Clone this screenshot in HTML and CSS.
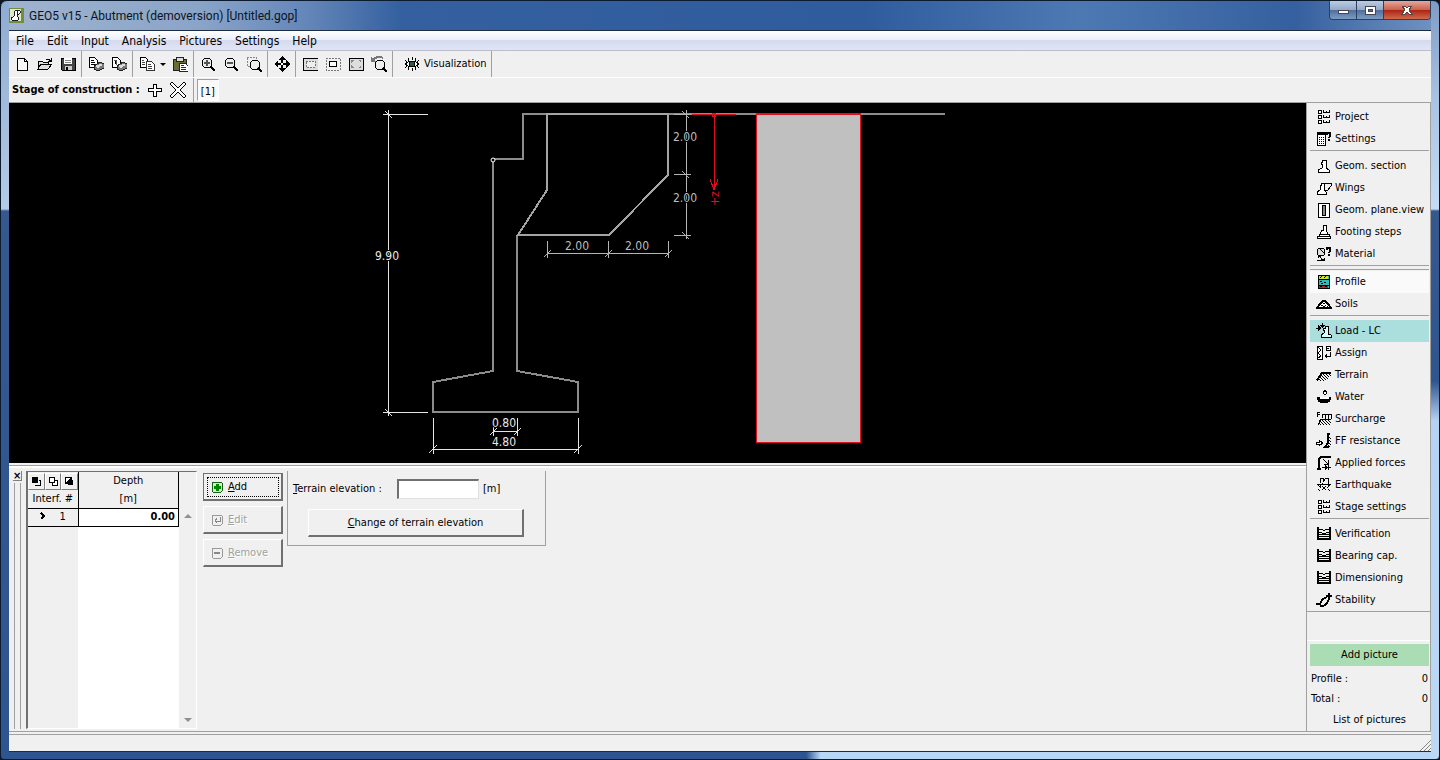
FILE: index.html
```
<!DOCTYPE html>
<html lang="en">
<head>
  <meta charset="UTF-8">
  <title>GEO5 v15 - Abutment (demoversion) [Untitled.gop]</title>
  <link rel="stylesheet" href="styles.css">
</head>
<body>
  <!-- icon set -->
  <svg class="sprite" aria-hidden="true">
    <defs>
      <pattern id="hatch" width="3" height="3" patternUnits="userSpaceOnUse"><path d="M0 0h1v1h-1zM1 1h1v1h-1zM2 2h1v1h-1z" fill="#000"/></pattern>
      <symbol id="i-new" viewBox="0 0 16 16"><path d="M3 2h7l3 3v9h-10z" fill="#f8f8f8" stroke="#000"/><path d="M10 2v3h3" fill="none" stroke="#000"/></symbol>
      <symbol id="i-open" viewBox="0 0 16 16"><path d="M1 13V5h4l1 1h5v2M1 13l3-5h11l-4 5z" fill="#ddd" stroke="#000"/><path d="M9 3h2l3 2M14 2v3h-3" fill="none" stroke="#000"/></symbol>
      <symbol id="i-save" viewBox="0 0 16 16"><path d="M1 2h14v12h-13l-1-1z" fill="#444" stroke="#000"/><path d="M4 2h8v6h-8z" fill="#fff"/><path d="M5 10h7v4h-7z" fill="#ccc"/><path d="M6 11h2v3h-2z"/><path d="M5 4h6M5 6h6" stroke="#888"/></symbol>
      <symbol id="i-print" viewBox="0 0 16 16"><path d="M1 1h5l3 3v7h-8z" fill="#fff" stroke="#000"/><path d="M3 4h3M3 6h4M3 8h4" stroke="#000"/><path d="M6 10l6-4 4 2v4l-6 3-4-2z" fill="#777" stroke="#222"/><path d="M7 10l5-2 3 1-5 3z" fill="#ddd"/></symbol>
      <symbol id="i-print2" viewBox="0 0 16 16"><path d="M1 1h5l3 3v7h-8z" fill="#fff" stroke="#000"/><path d="M3 4h2v5M5 4v4" stroke="#555"/><path d="M6 10l6-4 4 2v4l-6 3-4-2z" fill="#777" stroke="#222"/><path d="M7 10l5-2 3 1-5 3z" fill="#ddd"/></symbol>
      <symbol id="i-copy" viewBox="0 0 16 16"><path d="M1 1h5l2 2v8h-7z" fill="#fff" stroke="#000"/><path d="M7 5h5l3 3v6h-8z" fill="#fff" stroke="#333"/><path d="M3 4h2M3 6h3M3 8h3M9 8h3M9 10h4M9 12h4" stroke="#444"/></symbol>
      <symbol id="i-paste" viewBox="0 0 16 16"><path d="M1 3h13v11h-13z" fill="#6b6b35" stroke="#222"/><path d="M4 1h7v4h-7z" fill="#ddd" stroke="#222"/><path d="M7 7h6l3 3v5h-9z" fill="#fff" stroke="#224"/><path d="M9 9h3M9 11h5M9 13h5" stroke="#226"/></symbol>
      <symbol id="i-lens" viewBox="0 0 16 16"><circle cx="7" cy="7" r="5" fill="#eee" stroke="#000"/><path d="M11 11l4 4" stroke="#000" stroke-width="2"/></symbol>
      <symbol id="i-zoomin" viewBox="0 0 16 16"><use href="#i-lens"/><path d="M4 7h6M7 4v6" stroke="#555" stroke-width="2"/></symbol>
      <symbol id="i-zoomout" viewBox="0 0 16 16"><use href="#i-lens"/><path d="M4 7h6" stroke="#555" stroke-width="2"/></symbol>
      <symbol id="i-zoombox" viewBox="0 0 16 16"><path d="M1 1h9v9h-9z" fill="none" stroke="#888" stroke-dasharray="2 1"/><circle cx="9" cy="9" r="5" fill="#eee" stroke="#000"/><path d="M12 12l4 4" stroke="#000" stroke-width="2"/></symbol>
      <symbol id="i-move" viewBox="0 0 16 16"><path d="M8 1v14M1 8h14" stroke="#000" stroke-width="2"/><path d="M8 0l4 4h-8zM8 16l4-4h-8zM0 8l4-4v8zM16 8l-4-4v8z"/><path d="M7 7h2v2h-2z" fill="#fff"/></symbol>
      <symbol id="i-all" viewBox="0 0 16 16"><path d="M1 2h15v12h-15z" fill="#ddd" stroke="#000"/><path d="M4 5h9v6h-9z" fill="#eee" stroke="#777" stroke-dasharray="2 1"/></symbol>
      <symbol id="i-sel" viewBox="0 0 16 16"><path d="M1 2h14v12h-14z" fill="none" stroke="#777" stroke-dasharray="2 1"/><path d="M4 5h8v6h-8z"/><path d="M5 6h6v4h-6z" fill="#fff"/></symbol>
      <symbol id="i-fit" viewBox="0 0 16 16"><path d="M1 2h14v12h-14z" fill="#ddd" stroke="#000"/><path d="M3 4h3l-3 3zM13 4h-3l3 3zM3 12h3l-3-3zM13 12h-3l3-3z" fill="#888"/></symbol>
      <symbol id="i-zoomback" viewBox="0 0 16 16"><path d="M2 4c2-3 7-4 10-2" fill="none" stroke="#777" stroke-width="2"/><path d="M0 1l5 5h-5z" fill="#777"/><circle cx="9" cy="9" r="5" fill="#eee" stroke="#000"/><path d="M12 12l4 4" stroke="#000" stroke-width="2"/></symbol>
      <symbol id="i-eye" viewBox="0 0 16 16"><path d="M1 8c4-4 10-4 14 0-4 4-10 4-14 0z" fill="#fff" stroke="#000"/><circle cx="8" cy="8" r="3" fill="#1f5f50" stroke="#000"/><path d="M8 1v3M4 2l1 3M12 2l-1 3M1 4l2 2M15 4l-2 2M8 12v3M4 14l1-3M12 14l-1-3M1 12l2-2M15 12l-2-2" stroke="#000"/></symbol>
      <symbol id="i-plus" viewBox="0 0 16 16"><path d="M6 2h3v4h5v3h-5v5h-3v-5h-5v-3h5z" fill="#fff" stroke="#000"/></symbol>
      <symbol id="i-cross" viewBox="0 0 16 16"><path d="M2 2l12 12M14 2l-12 12" stroke="#000" stroke-width="4" stroke-linecap="square"/><path d="M2 2l12 12M14 2l-12 12" stroke="#fff" stroke-width="2" stroke-linecap="square"/></symbol>

      <symbol id="i-list" viewBox="0 0 16 16"><path d="M2 1h3v3h-3zM2 6h3v3h-3zM2 11h3v3h-3z" fill="#fff" stroke="#000"/><path d="M7 1v2h6v-2M10 2v1M7 6v2h6v-2M10 7v1M7 11v2h6v-2M10 12v1" fill="none" stroke="#000"/></symbol>
      <symbol id="i-calc" viewBox="0 0 16 16"><path d="M1 1h8v13h-8z" fill="#fff" stroke="#000"/><path d="M1 1h8v3h-8zM3 6h1v1h-1zM5 6h1v1h-1zM7 6h1v1h-1zM3 8h1v1h-1zM5 8h1v1h-1zM7 8h1v1h-1zM3 10h1v1h-1zM5 10h1v1h-1zM7 10h1v1h-1zM3 12h1v1h-1zM5 12h1v1h-1zM7 12h1v1h-1z"/><path d="M11 4v-2h3v3l-1 2M13 8v2" fill="none" stroke="#000" stroke-width="2"/></symbol>
      <symbol id="i-geom" viewBox="0 0 16 16"><path d="M6 2h4v8l3 2v2h-11v-2l4-2v-4h-1v-2h1z" fill="#fff" stroke="#000"/></symbol>
      <symbol id="i-wings" viewBox="0 0 16 16"><path d="M5 3h3v7l2 2v2h-9v-2l3-2 1-2h-1v-3h1z" fill="#fff" stroke="#000"/><path d="M8 3h7v3l-3 4h-3" fill="none" stroke="#000"/></symbol>
      <symbol id="i-plane" viewBox="0 0 16 16"><path d="M2 1h11v14h-11z" fill="#fff" stroke="#000"/><path d="M6 3h3v10h-3z" fill="#888" stroke="#000"/></symbol>
      <symbol id="i-footing" viewBox="0 0 16 16"><path d="M7 1h3v5l2 4h-8l2-4h1zM3 10h10v2h-10zM1 12h13v2h-13z" fill="#fff" stroke="#000"/></symbol>
      <symbol id="i-material" viewBox="0 0 16 16"><circle cx="5" cy="6" r="4" fill="#ddd" stroke="#000"/><path d="M4 3l4 4M2 12c0-2 3-2 3 0s4 2 4 0M1 14h8" fill="none" stroke="#000"/><path d="M11 4v-2h3v3l-1 2M13 8v2" fill="none" stroke="#000" stroke-width="2"/></symbol>
      <symbol id="i-profile" viewBox="0 0 16 16"><path d="M2 1h11v13h-11z" fill="#3bb" stroke="#000"/><path d="M3 2h9v3h-9z" fill="#cd3"/><path d="M3 11h9v3h-9z" fill="#b22"/><path d="M2 5h11M2 11h11M4 7h2M8 8h2M5 9h2M4 4l2-2M8 4l2-2M4 13l2-1M9 13l2-1" stroke="#000"/></symbol>
      <symbol id="i-soils" viewBox="0 0 16 16"><path d="M1 12l3-4 3-3h2l3 3 3 4z" fill="#fff" stroke="#000" stroke-width="2"/><path d="M7 7h2M5 9h2M9 9h1M7 10h2M4 11h1M11 10h1" stroke="#000"/></symbol>
      <symbol id="i-load" viewBox="0 0 16 16"><path d="M9 3h3v8l3 1v2h-10v-2l3-2v-3h-1v-2h2z" fill="#d8ffff" stroke="#000"/><path d="M0 5h4M6 0v3" stroke="#000"/><path d="M2 2l4 3-4 3zM4 2h5l-3 3z"/></symbol>
      <symbol id="i-assign" viewBox="0 0 16 16"><path d="M1 1h5v13h-5zM10 1h4v4h-4z" fill="#fff" stroke="#000"/><path d="M2 2l3 3-3 3 3 3-3 2M11 3h2M14 7v4h-4" fill="none" stroke="#000"/><path d="M8 11l3-3v6z"/></symbol>
      <symbol id="i-terrain" viewBox="0 0 16 16"><path d="M1 13l4-7h10v3l-6 5h-8z" fill="url(#hatch)"/><path d="M1 13l5-7h9" fill="none" stroke="#000" stroke-width="2"/></symbol>
      <symbol id="i-water" viewBox="0 0 16 16"><path d="M1 8h14c0 4-2 6-5 6h-4c-3 0-5-2-5-6z"/><ellipse cx="8" cy="9" rx="5" ry="1" fill="#fff"/><path d="M9 1l2 3-2 2-2-2z" fill="#fff" stroke="#000"/></symbol>
      <symbol id="i-surcharge" viewBox="0 0 16 16"><path d="M1 6V1h3M1 3h3M6 7V3h9v5M9 3v5M12 3v5" fill="none" stroke="#000"/><path d="M4 8h11v6h-13z" fill="url(#hatch)"/><path d="M2 14l3-6h10" fill="none" stroke="#000"/></symbol>
      <symbol id="i-resist" viewBox="0 0 16 16"><path d="M0 9h3v-2l4 3-4 3v-2h-3z" fill="#fff" stroke="#000"/><path d="M14 1h-2v9l-3 4h4" fill="none" stroke="#000" stroke-width="2"/><path d="M12 3h3v11h-3z" fill="url(#hatch)"/></symbol>
      <symbol id="i-forces" viewBox="0 0 16 16"><path d="M3 14V5c0-2 1-3 3-3h9M1 14h4" fill="none" stroke="#000" stroke-width="2"/><path d="M7 4l5 5M12 5v4h-4M6 12h5M12 10v5M10 12h5" fill="none" stroke="#000"/><path d="M9 10l3 2-3 3z"/></symbol>
      <symbol id="i-quake" viewBox="0 0 16 16"><path d="M4 6V1h3v4l3-4h2v6M1 7h14M2 8l3 3M14 8l-3 3M6 9l4 4M10 9l-4 4M2 12l2 2M12 12l2 2M4 7v3M12 7v3" fill="none" stroke="#000"/></symbol>
      <symbol id="i-verify" viewBox="0 0 16 16"><path d="M1 1h2v12h-2zM13 1h2v12h-2zM1 12h14v2h-14z"/><path d="M3 3h3l2 2 2-2h3M3 6l3 1h4l3-1M3 9l3-1h4l3 1M3 10h10" fill="none" stroke="#000"/></symbol>
      <symbol id="i-stability" viewBox="0 0 16 16"><path d="M0 12h4l1 2c5 0 8-4 8-10M5 11c0-3 3-5 6-6M10 4h6M13 1v5" fill="none" stroke="#000" stroke-width="2"/></symbol>
    </defs>
  </svg>

  <div class="window">
    <header class="titlebar">
      <svg class="app-icon" viewBox="0 0 16 16"><rect width="16" height="16" rx="2" fill="#6d8f3f"/><rect x="1" y="1" width="12" height="13" fill="#dfe8c8"/><path d="M6 3h3v6l1 1v3H3v-3l2-1 1-2zM9 3h3v2l-2 2H9" fill="#fff" stroke="#111"/></svg>
      <h1>GEO5 v15 - Abutment (demoversion) [Untitled.gop]</h1>
      <div class="window-buttons">
        <button class="minimize" aria-label="Minimize"><svg viewBox="0 0 12 10"><rect x="1" y="5" width="10" height="3" fill="#fff" stroke="#445"/></svg></button>
        <button class="maximize" aria-label="Maximize"><svg viewBox="0 0 12 10"><path d="M1 1h10v8h-10zM4 4h4v2h-4z" fill="#fff" fill-rule="evenodd" stroke="#445"/></svg></button>
        <button class="close" aria-label="Close"><svg viewBox="0 0 12 10"><path d="M1 1h3l2 2 2-2h3l-3 4 3 4h-3l-2-2-2 2h-3l3-4z" fill="#fff" stroke="#544"/></svg></button>
      </div>
    </header>

    <div class="client">
      <nav class="menu">
        <button>File</button><button>Edit</button><button>Input</button><button>Analysis</button><button>Pictures</button><button>Settings</button><button>Help</button>
      </nav>

      <div class="toolbar">
        <div class="tools">
          <button aria-label="New"><svg><use href="#i-new"/></svg></button>
          <button aria-label="Open"><svg><use href="#i-open"/></svg></button>
          <button aria-label="Save"><svg><use href="#i-save"/></svg></button>
        </div>
        <div class="tools">
          <button aria-label="Print document"><svg><use href="#i-print"/></svg></button>
          <button aria-label="Print picture"><svg><use href="#i-print2"/></svg></button>
        </div>
        <div class="tools">
          <button aria-label="Copy"><svg><use href="#i-copy"/></svg></button>
          <button class="drop" aria-label="Copy options"></button>
          <button aria-label="Paste"><svg><use href="#i-paste"/></svg></button>
        </div>
        <div class="tools">
          <button aria-label="Zoom in"><svg><use href="#i-zoomin"/></svg></button>
          <button aria-label="Zoom out"><svg><use href="#i-zoomout"/></svg></button>
          <button aria-label="Zoom window"><svg><use href="#i-zoombox"/></svg></button>
        </div>
        <div class="tools">
          <button aria-label="Pan"><svg><use href="#i-move"/></svg></button>
        </div>
        <div class="tools">
          <button aria-label="Show all"><svg><use href="#i-all"/></svg></button>
          <button aria-label="Show selection"><svg><use href="#i-sel"/></svg></button>
          <button aria-label="Fit"><svg><use href="#i-fit"/></svg></button>
          <button aria-label="Previous zoom"><svg><use href="#i-zoomback"/></svg></button>
        </div>
        <div class="tools">
          <button class="wide"><svg><use href="#i-eye"/></svg>Visualization</button>
        </div>
      </div>

      <div class="stagebar">
        <b>Stage of construction :</b>
        <button aria-label="Add stage"><svg><use href="#i-plus"/></svg></button>
        <button aria-label="Remove stage"><svg><use href="#i-cross"/></svg></button>
        <div class="stages"><button>[1]</button></div>
      </div>

      <div class="main">
        <div class="work">
          <svg class="drawing" viewBox="9 103 1297 360" preserveAspectRatio="xMidYMin meet">
            <g class="outline">
              <path d="M945 114H523V159H493V371L433 382V412H578V382L517 371V235"/>
              <path class="wing" d="M547 114V190L518 235H609L668 175V114z"/>
            </g>
            <rect class="soil-edge" x="756" y="113" width="105" height="330"/>
            <rect class="soil" x="757" y="115" width="103" height="327"/>
            <circle class="node" cx="493" cy="160" r="2"/>

            <g class="dim strong">
              <path d="M388 110V416M383 114H428M383 412H428M385 111l7 7M385 409l7 7"/>
              <path d="M433 418V454M578 418V454M433 449H578M429 453l8-8M574 453l8-8"/>
              <path d="M493 426V436M517 418V436M493 431H517M490 435l7-7M514 435l7-7"/>
            </g>
            <g class="dim">
              <path d="M547 241V258M608 241V258M668 241V258M547 253H668M544 257l7-7M605 257l7-7M665 257l7-7"/>
              <path d="M686 110V239M674 114H691M674 174H691M674 235H691M682 111l7 7M682 171l7 7M682 232l7 7"/>
            </g>
            <g class="axis">
              <path d="M692 114H736M714 114V190M710 179l4 11 4-11"/>
              <circle cx="714" cy="115" r="2"/>
              <text transform="translate(719 206) rotate(-90)">+z</text>
            </g>
            <g class="values">
              <text class="bright" x="387" y="260">9.90</text>
              <text class="bright" x="504" y="427">0.80</text>
              <text class="bright" x="504" y="446">4.80</text>
              <text x="577" y="250">2.00</text>
              <text x="637" y="250">2.00</text>
              <text x="685" y="141">2.00</text>
              <text x="685" y="202">2.00</text>
            </g>
          </svg>

          <section class="panel">
            <div class="grip"><button aria-label="Close panel">×</button></div>

            <div class="grid">
              <table>
                <thead>
                  <tr>
                    <th>
                      <div class="row-tools">
                        <button aria-label="Select all"><svg viewBox="0 0 10 10"><path d="M1 1h6v6h-6z"/><path d="M8 4h1v5h-5" fill="none" stroke="#000"/></svg></button>
                        <button aria-label="Select none"><svg viewBox="0 0 10 10"><path d="M4 4h5v5h-5z" fill="#fff" stroke="#000"/><path d="M1 1h5v5h-5z" fill="#fff" stroke="#000"/></svg></button>
                        <button aria-label="Invert"><svg viewBox="0 0 10 10"><path d="M1 1h6v6h-6z" fill="#fff" stroke="#000"/><path d="M7 1v6h-6zM8 4h1v5h-5v-1z"/></svg></button>
                      </div>
                    </th>
                    <th>Depth</th>
                  </tr>
                  <tr><th>Interf. #</th><th>[m]</th></tr>
                </thead>
                <tbody>
                  <tr><th class="row-no"><svg viewBox="0 0 6 8"><path d="M1 1l3 3-3 3" fill="none" stroke="#000" stroke-width="2"/></svg><span>1</span></th><td>0.00</td></tr>
                </tbody>
              </table>
              <div class="scroll"></div>
            </div>

            <div class="actions">
              <button class="focused"><svg viewBox="0 0 12 12"><rect x="1" y="1" width="10" height="10" rx="1" fill="#cfeccf" stroke="#186018"/><path d="M5 3h2v2h2v2h-2v2h-2v-2h-2v-2h2z" fill="#080" stroke="#080"/></svg><span><u>A</u>dd</span></button>
              <button disabled><svg viewBox="0 0 12 12"><rect x="1" y="1" width="10" height="10" rx="1" fill="none" stroke="#999"/><path d="M9 3v4h-5M6 4l-2 3 2 2" fill="none" stroke="#888"/></svg><span><u>E</u>dit</span></button>
              <button disabled><svg viewBox="0 0 12 12"><rect x="1" y="1" width="10" height="10" rx="1" fill="none" stroke="#999"/><path d="M3 6h6" stroke="#888" stroke-width="2"/></svg><span><u>R</u>emove</span></button>
            </div>

            <div class="terrain">
              <div class="field">
                <label for="elevation"><u>T</u>errain elevation :</label>
                <input type="text" id="elevation">
                <span>[m]</span>
              </div>
              <button><span><u>C</u>hange of terrain elevation</span></button>
            </div>
          </section>
        </div>

        <aside class="side">
          <nav class="modes">
            <div>
              <button><svg><use href="#i-list"/></svg>Project</button>
              <button><svg><use href="#i-calc"/></svg>Settings</button>
            </div>
            <div class="double">
              <button><svg><use href="#i-geom"/></svg>Geom. section</button>
              <button><svg><use href="#i-wings"/></svg>Wings</button>
              <button><svg><use href="#i-plane"/></svg>Geom. plane.view</button>
              <button><svg><use href="#i-footing"/></svg>Footing steps</button>
              <button><svg><use href="#i-material"/></svg>Material</button>
            </div>
            <div>
              <button class="current"><svg><use href="#i-profile"/></svg>Profile</button>
              <button><svg><use href="#i-soils"/></svg>Soils</button>
            </div>
            <div>
              <button class="hot"><svg><use href="#i-load"/></svg>Load - LC</button>
              <button><svg><use href="#i-assign"/></svg>Assign</button>
              <button><svg><use href="#i-terrain"/></svg>Terrain</button>
              <button><svg><use href="#i-water"/></svg>Water</button>
              <button><svg><use href="#i-surcharge"/></svg>Surcharge</button>
              <button><svg><use href="#i-resist"/></svg>FF resistance</button>
              <button><svg><use href="#i-forces"/></svg>Applied forces</button>
              <button><svg><use href="#i-quake"/></svg>Earthquake</button>
              <button><svg><use href="#i-list"/></svg>Stage settings</button>
            </div>
            <div>
              <button><svg><use href="#i-verify"/></svg>Verification</button>
              <button><svg><use href="#i-verify"/></svg>Bearing cap.</button>
              <button><svg><use href="#i-verify"/></svg>Dimensioning</button>
              <button><svg><use href="#i-stability"/></svg>Stability</button>
            </div>
          </nav>
          <div class="pictures">
            <button class="add-picture">Add picture</button>
            <p><span>Profile :</span><span>0</span></p>
            <p><span>Total :</span><span>0</span></p>
            <button>List of pictures</button>
          </div>
        </aside>
      </div>

      <footer class="status"><svg viewBox="0 0 12 12"><path d="M1 12L12 1M5 12l7-7M9 12l3-3" stroke="#888"/></svg></footer>
    </div>
  </div>
</body>
</html>
```
FILE: styles.css
```
* {
  box-sizing: border-box;
}
body {
  margin: 0;
  background: #101820;
  font-family: "DejaVu Sans Condensed", "DejaVu Sans", sans-serif;
  font-size: 11px;
  line-height: 14px;
  color: #000;
}
button {
  font: inherit;
  color: inherit;
  background: none;
  border: none;
  padding: 0;
}
svg {
  display: block;
  shape-rendering: crispEdges;
}
.sprite {
  position: absolute;
  width: 0;
  height: 0;
}

/* window frame */
.window {
  display: flex;
  flex-direction: column;
  height: 100vh;
  padding: 0 8px 7px;
  border: 1px solid #0c1c30;
  border-radius: 7px 7px 4px 4px;
  background:
    linear-gradient(#7f9cc4 0, #a9c3e4 100px, #c4dcf6 208px, #35588e 210px, #2f5590 380px, #b4d3f4 420px, #bcd8f5 100%) right / 8px 100% no-repeat,
    linear-gradient(#8fabd0 0, #b5cbe6 208px, #35588e 210px, #2f5590 100%) left / 8px 100% no-repeat,
    linear-gradient(90deg, #2f5590 56%, #b8d6f5 57%) bottom / 100% 8px no-repeat,
    linear-gradient(90deg, #9fb4cf 0, #8aa4c8 200px, #6285b8 310px, #34609f 400px, #2f5c9d 60%, #4d79b3 75%, #35609f 90%, #7394c2 100%);
}
.titlebar {
  display: flex;
  align-items: center;
  gap: 5px;
  height: 29px;
}
.app-icon {
  width: 15px;
  height: 15px;
}
.titlebar h1 {
  flex: 1;
  margin: 0;
  font: 12px Roboto, "Open Sans", sans-serif;
  color: #0c1420;
}
.window-buttons {
  display: flex;
  align-self: flex-start;
  border: 1px solid #2c3f5c;
  border-top: none;
  border-radius: 0 0 4px 4px;
  overflow: hidden;
}
.window-buttons button {
  display: flex;
  justify-content: center;
  align-items: center;
  width: 27px;
  height: 18px;
  border-right: 1px solid #2c3f5c;
  background: linear-gradient(#bccbe0 0, #93a9c8 50%, #4f6e9b 51%, #7c9bc4 100%);
}
.window-buttons .close {
  width: 46px;
  border: none;
  background: linear-gradient(#e5a899 0, #cb5f4c 50%, #ad2414 51%, #cf6a4a 100%);
}
.window-buttons svg {
  width: 12px;
  height: 10px;
}
.client {
  flex: 1;
  display: flex;
  flex-direction: column;
  min-height: 0;
  border: 1px solid #1c2c44;
  border-width: 1px 0 1px 0;
  background: #f0f0f0;
}

/* bars on top */
.menu {
  display: flex;
  align-items: center;
  gap: 1px;
  height: 20px;
  padding-left: 1px;
  border-bottom: 1px solid #b8bccb;
  background: linear-gradient(#fff 0, #eceffa 45%, #d5daee 50%, #e1e5f6 100%);
  font-size: 12px;
}
.menu button {
  padding: 0 6px;
}
.toolbar,
.stagebar {
  display: flex;
  align-items: center;
}
.toolbar {
  height: 27px;
  border-bottom: 1px solid #fff;
}
.tools {
  display: flex;
  align-items: center;
  height: 26px;
  padding: 0 2px;
  border-right: 1px solid #a0a0a0;
}
.tools:first-child {
  padding-left: 1px;
}
.tools button {
  display: flex;
  justify-content: center;
  align-items: center;
  width: 23px;
  height: 22px;
}
.tools svg,
.stagebar svg,
.modes svg {
  width: 16px;
  height: 16px;
}
.tools .wide {
  width: auto;
  gap: 4px;
  padding: 0 3px 0 9px;
}
.tools .drop {
  width: 10px;
}
.drop::after {
  content: "";
  border: 3px solid transparent;
  border-top-color: #000;
  border-bottom: none;
}
.stagebar {
  height: 25px;
  gap: 7px;
  padding-left: 3px;
  border-bottom: 1px solid #a0a0a0;
}
.stages {
  align-self: stretch;
  padding: 1px 0 0 3px;
  border-left: 1px solid #a0a0a0;
}
.stages button {
  height: 22px;
  padding: 3px 3px 0;
  border: 1px solid #a0a0a0;
  border-color: #a0a0a0 #fff #fff #a0a0a0;
  background: #fafafa;
}

/* drawing and input panel */
.main {
  flex: 1;
  display: flex;
  min-height: 0;
}
.work {
  flex: 1;
  display: flex;
  flex-direction: column;
  min-width: 0;
  border-right: 1px solid #a0a0a0;
}
.drawing {
  flex: 1;
  width: 100%;
  min-height: 0;
  background: #000;
}
.outline path {
  fill: none;
  stroke: #8c8c8c;
  stroke-width: 2;
}
.outline .wing {
  stroke: #a4a4a4;
}
.soil-edge {
  fill: #e01020;
}
.soil {
  fill: #c0c0c0;
}
.node {
  fill: #000;
  stroke: #fff;
  shape-rendering: auto;
}
.dim path {
  fill: none;
  stroke: #b4b4b4;
}
.strong path {
  stroke: #e4e4e4;
}
.axis {
  fill: none;
  stroke: #e01020;
}
.axis text {
  fill: #e01020;
  stroke: none;
  font-size: 12px;
}
.values text {
  fill: #bcbcbc;
  stroke: #000;
  stroke-width: 2px;
  paint-order: stroke;
  text-anchor: middle;
  font-size: 12px;
}
.values .bright {
  fill: #e8e8e8;
}
.panel {
  display: flex;
  height: 267px;
  margin-top: 2px;
  padding: 5px 0 2px 4px;
  border-top: 1px solid #a0a0a0;
  border-bottom: 1px solid #a0a0a0;
  box-shadow: inset 0 2px #fff;
}
.grip {
  width: 9px;
  display: flex;
  flex-direction: column;
  align-items: center;
}
.grip button {
  width: 9px;
  height: 10px;
  border-right: 1px solid #808080;
  border-bottom: 1px solid #808080;
  font-weight: bold;
  line-height: 8px;
}
.grip::after {
  content: "";
  flex: 1;
  width: 5px;
  margin-top: 2px;
  border: solid #a0a0a0;
  border-width: 0 1px;
}
.grid {
  display: flex;
  width: 171px;
  margin-left: 4px;
  border: 1px solid #fff;
  border-top-color: #707070;
  border-left: 2px solid #707070;
  background: linear-gradient(90deg, #f0f0f0 50px, #fff 50px);
}
.grid table {
  flex: 1;
  align-self: flex-start;
  border-collapse: collapse;
  table-layout: fixed;
}
.grid th {
  height: 18px;
  padding: 0;
  border-right: 1px solid #000;
  background: #f0f0f0;
  font-weight: normal;
}
.grid th:first-child {
  width: 50px;
}
.grid tbody tr {
  border: solid #000;
  border-width: 1px 0;
}
.grid td {
  padding: 0 3px 0 0;
  border-right: 1px solid #000;
  background: #fff;
  text-align: right;
  font-weight: bold;
}
.row-tools {
  display: flex;
}
.row-tools button {
  flex: 1;
  display: flex;
  justify-content: center;
  align-items: center;
  height: 17px;
  border: 1px solid #fff;
  border-right-color: #808080;
  border-bottom-color: #808080;
}
.row-tools svg {
  width: 10px;
  height: 10px;
}
.row-no svg {
  display: inline-block;
  width: 6px;
  height: 8px;
  margin-right: 14px;
}
.scroll {
  display: flex;
  flex-direction: column;
  justify-content: space-between;
  align-items: center;
  width: 17px;
  padding: 42px 0 6px;
  background: #f0f0f0;
}
.scroll::before,
.scroll::after {
  content: "";
  border: 4px solid transparent;
  border-bottom-color: #909090;
  border-top: none;
}
.scroll::after {
  border-top: 4px solid #909090;
  border-bottom: none;
}
.actions {
  display: flex;
  flex-direction: column;
  gap: 5px;
  margin: 2px 4px 0 6px;
}
.actions button,
.terrain button {
  display: flex;
  align-items: center;
  height: 28px;
  border: 1px solid #fff;
  border-right: 2px solid #707070;
  border-bottom: 2px solid #707070;
}
.actions button {
  width: 80px;
  gap: 5px;
  padding-left: 7px;
}
.actions .focused {
  border-top-color: #707070;
  border-left-color: #707070;
  outline: 1px dotted #000;
  outline-offset: -5px;
}
.actions button:disabled {
  color: #a0a0a0;
  text-shadow: 1px 1px #fff;
}
.actions svg {
  width: 12px;
  height: 12px;
}
.terrain {
  align-self: flex-start;
  width: 259px;
  height: 75px;
  padding: 8px 21px 0 5px;
  border: 1px solid #a0a0a0;
  border-top: none;
}
.field {
  display: flex;
  align-items: center;
  height: 20px;
}
.field label {
  width: 104px;
}
.field input {
  width: 82px;
  height: 20px;
  margin-right: 4px;
  border: 1px solid #e0e0e0;
  border-top: 2px solid #707070;
  border-left: 2px solid #707070;
  background: #fff;
  font: inherit;
}
.terrain button {
  justify-content: center;
  width: 216px;
  margin: 10px 0 0 15px;
}

/* right side */
.side {
  display: flex;
  flex-direction: column;
  justify-content: space-between;
  width: 124px;
  border-right: 1px solid #a0a0a0;
}
.modes {
  padding: 3px 1px 0 3px;
  border-bottom: 1px solid #a0a0a0;
}
.modes div {
  padding-bottom: 5px;
  background: linear-gradient(#a0a0a0, #a0a0a0) 0 calc(100% - 4px) / 100% 1px no-repeat;
}
.modes .double {
  padding-bottom: 6px;
  background:
    linear-gradient(#a0a0a0, #a0a0a0) 0 calc(100% - 5px) / 100% 1px no-repeat,
    linear-gradient(#a0a0a0, #a0a0a0) 0 calc(100% - 1px) / 100% 1px no-repeat;
}
.modes div:last-child {
  padding-bottom: 0;
  background: none;
}
.modes button {
  display: flex;
  align-items: center;
  gap: 3px;
  width: 100%;
  height: 22px;
  padding-left: 6px;
  white-space: nowrap;
}
.modes .current {
  background: #fafafa;
}
.modes .hot {
  background: #aadfdd;
}
.pictures {
  display: flex;
  flex-direction: column;
  height: 92px;
  padding: 3px 1px 0 3px;
  border-top: 1px solid #fff;
  border-bottom: 1px solid #a0a0a0;
}
.pictures button {
  height: 22px;
}
.pictures .add-picture {
  margin-bottom: 3px;
  background: #abddb5;
}
.pictures p {
  display: flex;
  justify-content: space-between;
  align-items: center;
  height: 20px;
  margin: 0;
  padding: 0 1px;
}
.status {
  display: flex;
  justify-content: flex-end;
  align-items: flex-end;
  height: 17px;
  margin-top: 2px;
  border-top: 1px solid #a0a0a0;
}
.status svg {
  width: 12px;
  height: 12px;
}
```
